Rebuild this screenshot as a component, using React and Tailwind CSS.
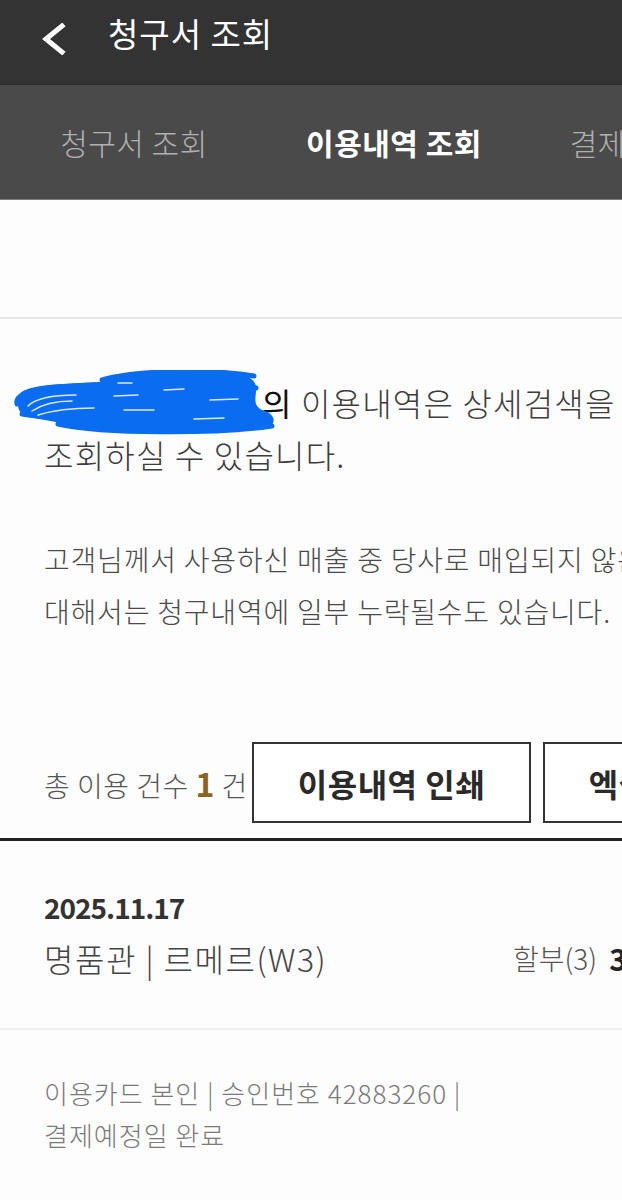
export default function App() {
  return (
    <div className="w-[622px] h-[1200px] overflow-hidden bg-[#fdfdfd] font-['Noto_Sans_CJK_KR','Noto_Sans',sans-serif]">
      {/* Top app bar */}
      <header className="h-[85px] bg-[#333333] flex items-start pl-[40px] border-b border-[#2b2b2b]">
        <svg className="mt-[23px] shrink-0" width="28" height="32" viewBox="0 0 28 32">
          <path d="M22 3 L6 16 L22 29" fill="none" stroke="#ffffff" strokeWidth="5" strokeLinecap="square" />
        </svg>
        <h1 className="ml-[40px] mt-[11px] text-[33px] leading-[44px] tracking-[1px] text-white font-normal">청구서 조회</h1>
      </header>

      {/* Tabs */}
      <nav className="h-[115px] bg-[#4a4a4a] flex items-center pl-[4px] border-b border-[#7d7d7d] whitespace-nowrap overflow-hidden">
        <div className="w-[260px] shrink-0 text-center text-[30px] tracking-[0.5px] font-light text-[#b0b0b0]">청구서 조회</div>
        <div className="w-[260px] shrink-0 text-center text-[30px] tracking-[0.5px] text-white font-bold">이용내역 조회</div>
        <div className="w-[260px] shrink-0 text-center text-[30px] tracking-[0.5px] font-light text-[#b0b0b0]">결제예정금액</div>
      </nav>

      <div className="h-[117px]" />
      <div className="h-[2px] bg-[#e6e6e6]" />

      {/* Intro text */}
      <div className="relative mt-[57px] px-[44px] text-[32px] leading-[52px] tracking-[1.2px] font-light text-[#3d3d3d] whitespace-nowrap">
        <div>
          <span className="inline-block w-[218px]" />
          <span className="text-[#111111] font-normal">의</span> 이용내역은 상세검색을
        </div>
        <div>조회하실 수 있습니다.</div>
        {/* marker scribble over the customer name */}
        <svg className="absolute left-[14px] top-[-6px]" width="270" height="66" viewBox="0 0 270 66">
          <path
            fill="#0a6cf0"
            d="M4,30 C2,20 20,15 50,14 L86,12 C95,6 140,2 200,2 C232,2 244,8 242,22 C241,30 240,36 248,40 C264,44 264,58 245,60 L130,62 C90,62 50,58 42,52 L20,48 C6,46 3,40 4,30 Z"
          />
          <g fill="none" stroke="#0a6cf0" strokeWidth="5" strokeLinecap="round">
            <path d="M3,34 C0,22 30,16 80,15 C140,13 220,8 242,18" />
            <path d="M8,44 C40,50 140,52 256,50" />
            <path d="M88,10 C120,0 200,-1 240,6" />
            <path d="M44,54 C90,64 200,64 258,56" />
          </g>
          <g fill="none" stroke="#ffffff" strokeWidth="1.5" strokeLinecap="round" opacity="0.85">
            <path d="M14,36 C22,28 40,25 62,25" />
            <path d="M18,41 C30,33 46,31 58,31" />
            <path d="M24,45 C40,40 60,38 80,38" />
            <path d="M100,26 L124,25" />
            <path d="M104,13 L118,13" />
            <path d="M150,20 L170,19" />
            <path d="M196,30 L224,29" />
            <path d="M110,40 L140,40" />
            <path d="M180,49 L210,48" />
          </g>
        </svg>
      </div>

      <div className="mt-[53px] px-[44px] text-[28px] leading-[52px] tracking-[0.8px] font-light text-[#4a4a4a] whitespace-nowrap">
        <div>고객님께서 사용하신 매출 중 당사로 매입되지 않은 건에</div>
        <div>대해서는 청구내역에 일부 누락될수도 있습니다.</div>
      </div>

      {/* Count + actions */}
      <div className="mt-[105px] pl-[44px] flex items-center whitespace-nowrap">
        <div className="w-[208px] shrink-0 text-[28px] tracking-[0.5px] font-light text-[#555555]">
          총 이용 건수 <span className="text-[32px] font-bold text-[#8a6420]">1</span> 건
        </div>
        <button className="w-[279px] h-[81px] shrink-0 border-2 border-[#333333] bg-white text-[32px] tracking-[0.5px] font-bold text-[#2a2a2a]">이용내역 인쇄</button>
        <button className="ml-[12px] w-[279px] h-[81px] shrink-0 border-2 border-[#333333] bg-white text-[32px] tracking-[0.5px] font-bold text-[#2a2a2a]">엑셀 다운로드</button>
      </div>
      <div className="mt-[15px] h-[3px] bg-[#222222]" />

      {/* Transaction item */}
      <div className="mt-[46px] px-[44px] whitespace-nowrap">
        <div className="text-[28px] leading-[40px] font-bold text-[#333333] tracking-[-1px]">2025.11.17</div>
        <div className="mt-[9px] flex items-center leading-[44px]">
          <div className="w-[469px] shrink-0 text-[32px] tracking-[1.5px] font-light text-[#444444]">명품관 | 르메르(W3)</div>
          <div className="shrink-0 text-[28px] font-light text-[#555555]">할부(3)</div>
          <div className="ml-[12px] shrink-0 text-[30px] font-bold text-[#222222]">3,600,000원</div>
        </div>
      </div>
      <div className="mt-[48px] h-[2px] bg-[#f0f0f0]" />

      <div className="mt-[42px] px-[44px] text-[26px] leading-[42px] tracking-[1px] font-light text-[#7a7a7a] whitespace-nowrap">
        <div>이용카드 본인 | 승인번호 42883260 |</div>
        <div>결제예정일 완료</div>
      </div>
    </div>
  );
}
